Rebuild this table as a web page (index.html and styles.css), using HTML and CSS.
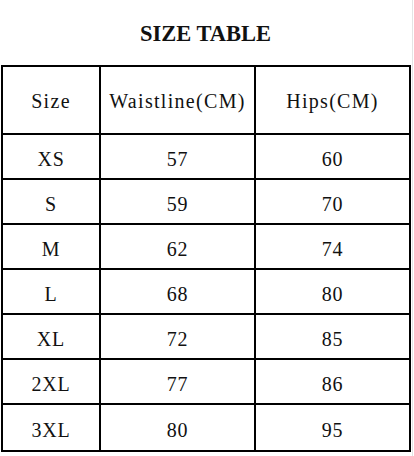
FILE: index.html
```html
<!DOCTYPE html>
<html>
<head>
<meta charset="utf-8">
<link rel="stylesheet" href="styles.css">
</head>
<body>
<div class="sheet">
  <h1 class="title">SIZE TABLE</h1>
  <table class="size-table">
    <colgroup>
      <col class="c1"><col class="c2"><col class="c3">
    </colgroup>
    <tr class="head"><td>Size</td><td>Waistline(CM)</td><td>Hips(CM)</td></tr>
    <tr><td>XS</td><td>57</td><td>60</td></tr>
    <tr><td>S</td><td>59</td><td>70</td></tr>
    <tr><td>M</td><td>62</td><td>74</td></tr>
    <tr><td>L</td><td>68</td><td>80</td></tr>
    <tr><td>XL</td><td>72</td><td>85</td></tr>
    <tr><td>2XL</td><td>77</td><td>86</td></tr>
    <tr class="last"><td>3XL</td><td>80</td><td>95</td></tr>
  </table>
</div>
</body>
</html>
```
FILE: styles.css
```css
html, body {
  margin: 0;
  padding: 0;
  background: #fff;
}
body {
  font-family: "Liberation Serif", "Times New Roman", serif;
  color: #111;
  width: 414px;
  height: 456px;
  overflow: hidden;
}
.sheet {
  width: 413px;
  height: 456px;
  border-right: 1px solid #e4e4e4;
  box-sizing: border-box;
  padding-left: 1px;
}
.title {
  margin: 0;
  height: 65px;
  display: flex;
  align-items: center;
  justify-content: center;
  font-size: 22.5px;
  letter-spacing: 0;
  font-weight: bold;
  padding-top: 3px;
  box-sizing: border-box;
  padding-right: 2px;
}
.size-table {
  border-collapse: collapse;
  width: 410px;
  table-layout: fixed;
}
.c1 { width: 98px; }
.c2 { width: 155px; }
.c3 { width: 155px; }
.size-table td {
  border: 2px solid #000;
  text-align: center;
  vertical-align: middle;
  font-size: 20px;
  letter-spacing: 0.8px;
  padding: 5px 0 0 0;
  height: 45px;
  box-sizing: border-box;
}
.size-table tr.head td {
  height: 68px;
  padding-top: 2px;
  letter-spacing: 1.3px;
}
.size-table tr.last td {
  height: 47px;
}
```
